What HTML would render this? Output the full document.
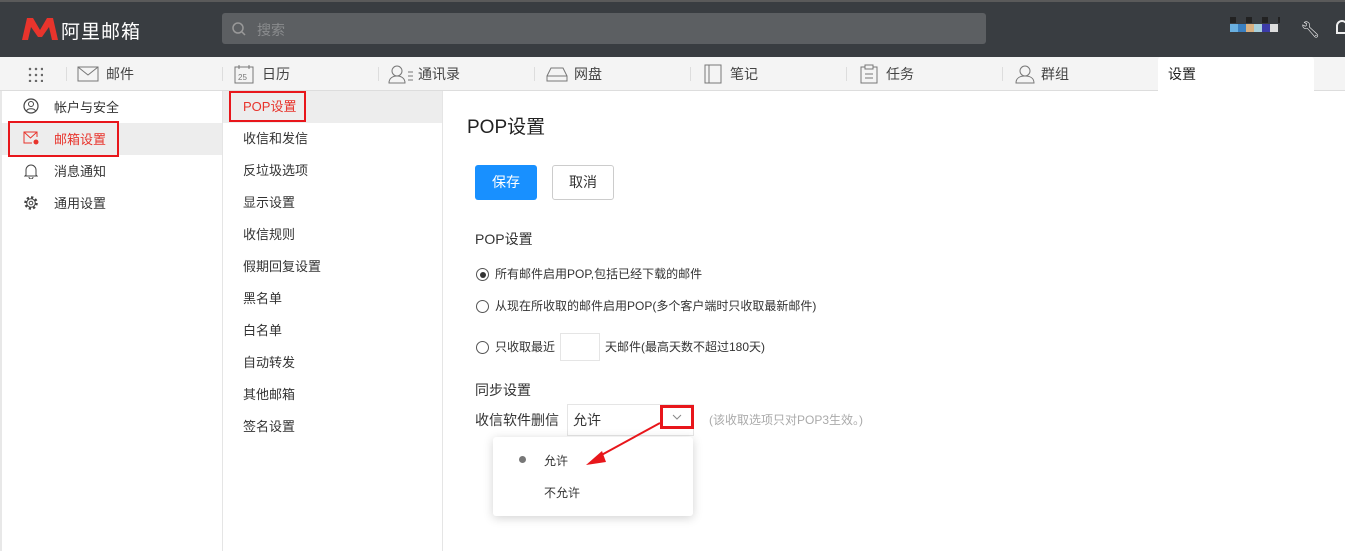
<!DOCTYPE html>
<html><head><meta charset="utf-8"><style>
*{box-sizing:border-box;margin:0;padding:0}
body{width:1345px;height:551px;overflow:hidden;background:#fff;font-family:"Liberation Sans","Noto Sans CJK SC",sans-serif;font-size:13px;color:#333;position:relative}
.abs{position:absolute}
.top{left:0;top:0;width:1345px;height:57px;background:#393d41;border-top:2px solid #5a5a5a}
.nav{left:0;top:57px;width:1345px;height:34px;background:#f4f4f4;border-bottom:1px solid #ddd}
.tab{position:absolute;top:1px;height:33px;line-height:33px;font-size:14px;color:#444}
.sep{position:absolute;top:10px;width:1px;height:14px;background:#ddd}
.red{border:2px solid #e8161b}
.item{position:absolute;font-size:13px;color:#333}
</style></head><body>
<div class="abs top">
 <svg class="abs" style="left:22px;top:15px" width="36" height="24" viewBox="0 0 36 24"><path d="M0 23 L5 1 L11 1 L18 13 L25 1 L31 1 L36 23 L30 23 L27 10 L20 20 L16 20 L9 10 L6 23Z" fill="#e8342c"/></svg>
 <div class="abs" style="left:61px;top:15px;color:#fff;font-size:19px;letter-spacing:1px">阿里邮箱</div>
 <div class="abs" style="left:222px;top:11px;width:764px;height:31px;background:#5c5f62;border-radius:3px"></div>
 <svg class="abs" style="left:232px;top:20px" width="14" height="14"><circle cx="6" cy="6" r="5" fill="none" stroke="#999" stroke-width="1.5"/><path d="M10 10L13 13" stroke="#999" stroke-width="1.5"/></svg>
 <div class="abs" style="left:257px;top:18px;color:#8a8c8e;font-size:14px">搜索</div>
 <div class="abs" style="left:1230px;top:15px;width:50px;height:6px;background:repeating-linear-gradient(90deg,#222 0 6px,transparent 6px 16px)"></div>
 <div class="abs" style="left:1230px;top:22px;width:48px;height:8px;background:linear-gradient(90deg,#6ab0e0 0 8px,#3a7fc0 8px 16px,#d9b080 16px 24px,#a8d0dc 24px 32px,#3c3ca8 32px 40px,#ddd 40px)"></div>
 <div class="abs" style="left:1300px;top:18px;color:#eee;font-size:16px">🔧︎</div>
 <div class="abs" style="left:1336px;top:18px;width:12px;height:14px;border:2px solid #eee;border-radius:6px 6px 0 0"></div>
</div>
<div class="abs nav">
 <div class="abs" style="left:27px;top:9px;width:16px;height:16px;background:radial-gradient(circle,#666 1px,transparent 1.5px) 0 0/6px 6px"></div>
 <div class="sep" style="left:66px"></div><div class="sep" style="left:222px"></div><div class="sep" style="left:378px"></div><div class="sep" style="left:534px"></div><div class="sep" style="left:690px"></div><div class="sep" style="left:846px"></div><div class="sep" style="left:1002px"></div>
 <svg class="abs" style="left:77px;top:9px" width="22" height="16"><rect x="1" y="1" width="20" height="14" fill="none" stroke="#777"/><path d="M1 1L11 9L21 1" fill="none" stroke="#777"/></svg>
 <div class="tab" style="left:106px">邮件</div>
 <svg class="abs" style="left:234px;top:7px" width="20" height="20"><rect x="1" y="3" width="18" height="16" fill="none" stroke="#777"/><path d="M5 1v4M15 1v4" stroke="#777"/><text x="4" y="16" font-size="8" fill="#777" font-family="Liberation Sans">25</text></svg>
 <div class="tab" style="left:262px">日历</div>
 <svg class="abs" style="left:388px;top:7px" width="26" height="20"><circle cx="9" cy="7" r="5" fill="none" stroke="#777"/><path d="M1 19c0-5 4-7 8-7s8 2 8 7Z" fill="none" stroke="#777"/><path d="M20 8h5M20 12h5M20 16h5" stroke="#777"/></svg>
 <div class="tab" style="left:418px">通讯录</div>
 <svg class="abs" style="left:546px;top:9px" width="22" height="16"><path d="M1 10L5 2H17L21 10V15H1Z" fill="none" stroke="#777"/><path d="M1 10H21" stroke="#777"/></svg>
 <div class="tab" style="left:574px">网盘</div>
 <svg class="abs" style="left:704px;top:7px" width="18" height="20"><rect x="1" y="1" width="16" height="18" fill="none" stroke="#777"/><path d="M5 1v18" stroke="#777"/></svg>
 <div class="tab" style="left:730px">笔记</div>
 <svg class="abs" style="left:860px;top:7px" width="18" height="20"><rect x="1" y="3" width="16" height="16" fill="none" stroke="#777"/><rect x="5" y="1" width="8" height="4" fill="#f4f4f4" stroke="#777"/><path d="M5 10h8M5 14h8" stroke="#777"/></svg>
 <div class="tab" style="left:886px">任务</div>
 <svg class="abs" style="left:1013px;top:7px" width="24" height="20"><circle cx="12" cy="7" r="5" fill="none" stroke="#777"/><path d="M3 19c0-5 4-7 9-7s9 2 9 7Z" fill="none" stroke="#777"/></svg>
 <div class="tab" style="left:1041px">群组</div>
 <div class="abs" style="left:1158px;top:0;width:156px;height:34px;background:#fff;border-radius:3px 3px 0 0"></div>
 <div class="tab" style="left:1168px;color:#222">设置</div>
</div>
<div class="abs" style="left:0;top:91px;width:2px;height:460px;background:#e8e8e8"></div>
<div class="abs" style="left:222px;top:91px;width:1px;height:460px;background:#e5e5e5"></div>
<div class="abs" style="left:442px;top:91px;width:1px;height:460px;background:#e5e5e5"></div>
<div class="abs" style="left:2px;top:123px;width:220px;height:32px;background:#ededed"></div>
<svg class="abs" style="left:23px;top:98px" width="16" height="16"><circle cx="8" cy="8" r="7" fill="none" stroke="#444" stroke-width="1.2"/><circle cx="8" cy="6" r="2.5" fill="none" stroke="#444"/><path d="M3.5 13c1-3 8-3 9 0" fill="none" stroke="#444"/></svg>
<div class="item" style="left:54px;top:97px">帐户与安全</div>
<div class="abs red" style="left:8px;top:121px;width:111px;height:36px"></div>
<svg class="abs" style="left:23px;top:131px" width="17" height="15"><path d="M14 6V1H1V12H9" fill="none" stroke="#e8342c"/><path d="M1 1L7.5 7L14 1" fill="none" stroke="#e8342c"/><circle cx="13" cy="11" r="2.5" fill="#e8342c"/></svg>
<div class="item" style="left:54px;top:129px;color:#e8342c">邮箱设置</div>
<svg class="abs" style="left:24px;top:163px" width="14" height="16"><path d="M2 12V7a5 5 0 0 1 10 0v5l1 1H1Z M5 14a2 2 0 0 0 4 0" fill="none" stroke="#444"/></svg>
<div class="item" style="left:54px;top:161px">消息通知</div>
<svg class="abs" style="left:23px;top:195px" width="16" height="16"><circle cx="8" cy="8" r="5.5" fill="none" stroke="#444" stroke-width="2.5" stroke-dasharray="2.2 2.1"/><circle cx="8" cy="8" r="4.3" fill="none" stroke="#444"/><circle cx="8" cy="8" r="1.8" fill="none" stroke="#444"/></svg>
<div class="item" style="left:54px;top:193px">通用设置</div>
<div class="abs" style="left:223px;top:91px;width:219px;height:32px;background:#ededed"></div>
<div class="abs red" style="left:229px;top:91px;width:77px;height:31px"></div>
<div class="item" style="left:243px;top:96px;color:#e8342c">POP设置</div>
<div class="item" style="left:243px;top:128px">收信和发信</div>
<div class="item" style="left:243px;top:160px">反垃圾选项</div>
<div class="item" style="left:243px;top:192px">显示设置</div>
<div class="item" style="left:243px;top:224px">收信规则</div>
<div class="item" style="left:243px;top:256px">假期回复设置</div>
<div class="item" style="left:243px;top:288px">黑名单</div>
<div class="item" style="left:243px;top:320px">白名单</div>
<div class="item" style="left:243px;top:352px">自动转发</div>
<div class="item" style="left:243px;top:384px">其他邮箱</div>
<div class="item" style="left:243px;top:416px">签名设置</div>
<div class="abs" style="left:467px;top:112px;font-size:19px;color:#222">POP设置</div>
<div class="abs" style="left:475px;top:165px;width:62px;height:35px;background:#1890ff;border-radius:3px;color:#fff;text-align:center;line-height:35px;font-size:14px">保存</div>
<div class="abs" style="left:552px;top:165px;width:62px;height:35px;border:1px solid #ccc;border-radius:3px;text-align:center;line-height:33px;font-size:14px">取消</div>
<div class="abs" style="left:475px;top:229px;font-size:14px">POP设置</div>
<div class="abs" style="left:476px;top:268px;width:13px;height:13px;border:1px solid #555;border-radius:50%"><div style="margin:2.5px;width:6px;height:6px;background:#333;border-radius:50%"></div></div>
<div class="item" style="left:495px;top:265px;font-size:12px">所有邮件启用POP,包括已经下载的邮件</div>
<div class="abs" style="left:476px;top:300px;width:13px;height:13px;border:1px solid #555;border-radius:50%"></div>
<div class="item" style="left:495px;top:297px;font-size:12px">从现在所收取的邮件启用POP(多个客户端时只收取最新邮件)</div>
<div class="abs" style="left:476px;top:341px;width:13px;height:13px;border:1px solid #555;border-radius:50%"></div>
<div class="item" style="left:495px;top:338px;font-size:12px">只收取最近</div>
<div class="abs" style="left:560px;top:333px;width:40px;height:28px;border:1px solid #e5e5e5"></div>
<div class="item" style="left:605px;top:338px;font-size:12px">天邮件(最高天数不超过180天)</div>
<div class="abs" style="left:475px;top:380px;font-size:14px">同步设置</div>
<div class="abs" style="left:475px;top:410px;font-size:14px">收信软件删信</div>
<div class="abs" style="left:567px;top:404px;width:127px;height:32px;border:1px solid #e5e5e5"></div>
<div class="abs" style="left:573px;top:410px;font-size:14px">允许</div>
<div class="abs red" style="left:660px;top:405px;width:34px;height:24px;border-width:3px"></div>
<svg class="abs" style="left:672px;top:414px" width="10" height="6"><path d="M1 1L5 5L9 1" fill="none" stroke="#888"/></svg>
<div class="abs" style="left:709px;top:411px;font-size:12px;color:#aaa">(该收取选项只对POP3生效。)</div>
<div class="abs" style="left:493px;top:437px;width:200px;height:79px;background:#fff;border-radius:3px;box-shadow:0 2px 10px rgba(0,0,0,.18)"></div>
<div class="abs" style="left:519px;top:456px;width:7px;height:7px;border-radius:50%;background:#777"></div>
<div class="item" style="left:544px;top:452px;font-size:12px">允许</div>
<div class="item" style="left:544px;top:484px;font-size:12px">不允许</div>
<svg class="abs" style="left:580px;top:420px" width="85" height="50"><path d="M80 3L16 38" stroke="#e8161b" stroke-width="2"/><path d="M6 45L22 31L26 42Z" fill="#e8161b"/></svg>
</body></html>
